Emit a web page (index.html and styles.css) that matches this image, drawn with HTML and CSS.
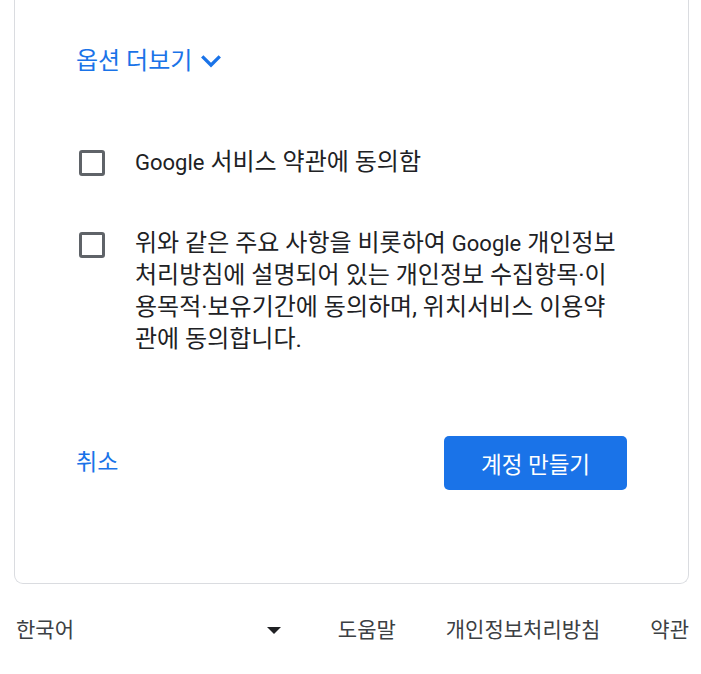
FILE: index.html
```html
<!DOCTYPE html>
<html lang="ko">
<head>
<meta charset="utf-8">
<title>계정 만들기</title>
<link rel="stylesheet" href="styles.css">
</head>
<body>
<div class="page">
  <main class="card">
    <button class="more-options" type="button">
      <span>옵션 더보기</span>
      <svg class="chevron" viewBox="6 8.5 12 7.6" width="20" height="12.6" aria-hidden="true"><path d="M16.59 8.59L12 13.17 7.41 8.59 6 10l6 6 6-6z" fill="#1a73e8"/></svg>
    </button>

    <label class="agree agree-first">
      <span class="box-col"><span class="checkbox"></span></span>
      <span class="agree-text"><span class="latin">Google</span> 서비스 약관에 동의함</span>
    </label>

    <label class="agree agree-second">
      <span class="box-col"><span class="checkbox"></span></span>
      <span class="agree-text">위와 같은 주요 사항을 비롯하여 <span class="latin">Google</span> 개인정보<br>처리방침에 설명되어 있는 개인정보 수집항목·이<br>용목적·보유기간에 동의하며, 위치서비스 이용약<br>관에 동의합니다.</span>
    </label>

    <div class="actions">
      <button class="btn-text" type="button">취소</button>
      <button class="btn-primary" type="button">계정 만들기</button>
    </div>
  </main>

  <footer class="footer">
    <div class="lang">
      <span>한국어</span>
      <svg class="drop" viewBox="7 10 10 5" width="14" height="7" aria-hidden="true"><path d="M7 10l5 5 5-5z" fill="#202124"/></svg>
    </div>
    <nav class="links">
      <a href="#">도움말</a>
      <a href="#">개인정보처리방침</a>
      <a href="#">약관</a>
    </nav>
  </footer>
</div>
</body>
</html>
```

FILE: styles.css
```css
* { box-sizing: border-box; }

html, body {
  margin: 0;
  padding: 0;
  background: #ffffff;
}

body {
  font-family: Roboto, "Noto Sans CJK KR", sans-serif;
  color: #202124;
}

.page {
  width: 675px;
  margin-left: 14px;
}

.card {
  border: 1px solid #dadce0;
  border-top: none;
  border-radius: 0 0 9px 9px;
  padding: 45px 61px 93px 61px;
  display: flex;
  flex-direction: column;
}

.more-options {
  align-self: flex-start;
  display: flex;
  align-items: center;
  gap: 9px;
  height: 32px;
  padding: 0;
  margin: 0;
  border: none;
  background: none;
  font-family: inherit;
  font-size: 24px;
  line-height: 32px;
  color: #1a73e8;
  cursor: pointer;
}

.chevron {
  display: block;
  margin-top: 1px;
}

.agree {
  display: flex;
  align-items: flex-start;
  font-size: 24px;
  line-height: 32px;
  color: #202124;
  cursor: pointer;
}

.latin {
  font-size: 22px;
  line-height: 1;
}

.agree-first { margin-top: 69px; }
.agree-second { margin-top: 49px; }

.box-col {
  flex: 0 0 59px;
  padding-left: 3px;
  padding-top: 5px;
}

.agree-first .box-col { padding-top: 4px; }

.checkbox {
  display: block;
  width: 26px;
  height: 26px;
  border: 3px solid #5f6368;
  border-radius: 3px;
}

.agree-text {
  flex: 1;
  white-space: nowrap;
}

.actions {
  margin-top: 81px;
  display: flex;
  justify-content: space-between;
  align-items: center;
}

.btn-text {
  padding: 0;
  border: none;
  background: none;
  font-family: inherit;
  font-size: 23px;
  line-height: 32px;
  color: #1a73e8;
  cursor: pointer;
}

.btn-primary {
  width: 183px;
  height: 54px;
  border: none;
  border-radius: 5px;
  background: #1a73e8;
  color: #ffffff;
  font-family: inherit;
  font-size: 22.5px;
  font-weight: 400;
  cursor: pointer;
}

.footer {
  margin-top: 32px;
  display: flex;
  justify-content: space-between;
  align-items: center;
  font-size: 21px;
  line-height: 28px;
  color: #3c4043;
}

.lang {
  width: 267px;
  padding-left: 2px;
  display: flex;
  justify-content: space-between;
  align-items: center;
}

.drop {
  display: block;
}

.links {
  display: flex;
  gap: 50px;
}

.links a {
  color: #3c4043;
  text-decoration: none;
}
```
